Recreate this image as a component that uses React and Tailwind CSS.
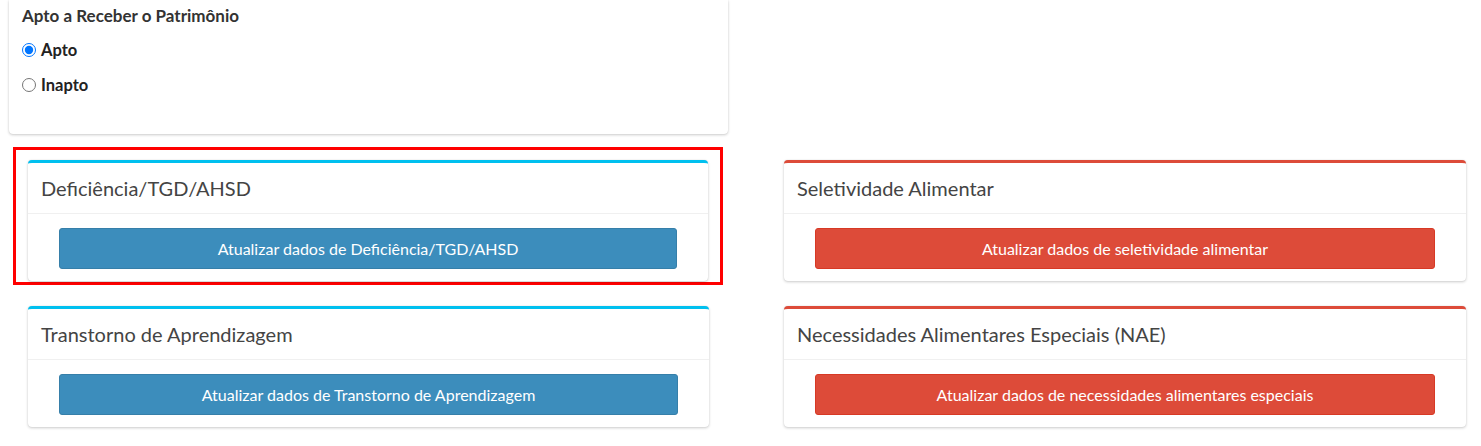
import React from "react";

// cartão no estilo AdminLTE, com faixa colorida no topo
function Card({ title, action, variant }) {
    const isRed = variant === "red";
    return (
        <div
            className={
                isRed
                    ? "bg-white rounded-[4px] border-t-[3px] border-[#dd4b39] shadow-[0_0_1px_rgba(0,0,0,0.125),0_1px_3px_rgba(0,0,0,0.2)]"
                    : "bg-white rounded-[4px] border-t-[3px] border-[#00c0ef] shadow-[0_0_1px_rgba(0,0,0,0.125),0_1px_3px_rgba(0,0,0,0.2)]"
            }
        >
            <div className="h-[51px] px-[13px] flex items-center border-b border-[#f0f0f0]">
                <h3 className="text-[20px] text-[#444] leading-none">{title}</h3>
            </div>
            <div className="pt-[14px] pb-[12px] px-[31px]">
                <button
                    type="button"
                    className={
                        isRed
                            ? "w-full h-[41px] rounded-[3px] bg-[#dd4b39] border border-[#d73925] text-white text-[16px]"
                            : "w-full h-[41px] rounded-[3px] bg-[#3c8dbc] border border-[#367fa9] text-white text-[16px]"
                    }
                >
                    {action}
                </button>
            </div>
        </div>
    );
}

export default function App() {
    return (
        <div className="w-[1481px] h-[446px] bg-white overflow-hidden font-['Lato','Noto_Sans',sans-serif]">
            {/* Apto a receber */}
            <div className="ml-[9px] w-[719px] h-[134px] bg-white rounded-b-[4px] shadow-[0_0_1px_rgba(0,0,0,0.125),0_1px_3px_rgba(0,0,0,0.2)] px-[13px] pt-[6px]">
                <p className="text-[17px] font-bold text-[#333] leading-[20px]">Apto a Receber o Patrimônio</p>
                <label className="flex items-center gap-[5px] mt-[14px] h-[20px]">
                    <input type="radio" name="apto" defaultChecked className="m-0 w-[14px] h-[14px]" />
                    <span className="text-[16.5px] font-bold text-[#222]">Apto</span>
                </label>
                <label className="flex items-center gap-[5px] mt-[15px] h-[20px]">
                    <input type="radio" name="apto" className="m-0 w-[14px] h-[14px]" />
                    <span className="text-[16.5px] font-bold text-[#222]">Inapto</span>
                </label>
            </div>

            <div className="flex items-start mt-[13px]">
                <div className="ml-[13px] w-[710px] border-[3px] border-[#ff0000] pt-[10px] pb-[1px] px-[12px]">
                    <Card variant="cyan" title="Deficiência/TGD/AHSD" action="Atualizar dados de Deficiência/TGD/AHSD" />
                </div>
                <div className="ml-[61px] w-[682px] mt-[13px]">
                    <Card variant="red" title="Seletividade Alimentar" action="Atualizar dados de seletividade alimentar" />
                </div>
            </div>

            <div className="flex items-start mt-[21px]">
                <div className="ml-[28px] w-[681px]">
                    <Card variant="cyan" title="Transtorno de Aprendizagem" action="Atualizar dados de Transtorno de Aprendizagem" />
                </div>
                <div className="ml-[75px] w-[682px]">
                    <Card variant="red" title="Necessidades Alimentares Especiais (NAE)" action="Atualizar dados de necessidades alimentares especiais" />
                </div>
            </div>
        </div>
    );
}
